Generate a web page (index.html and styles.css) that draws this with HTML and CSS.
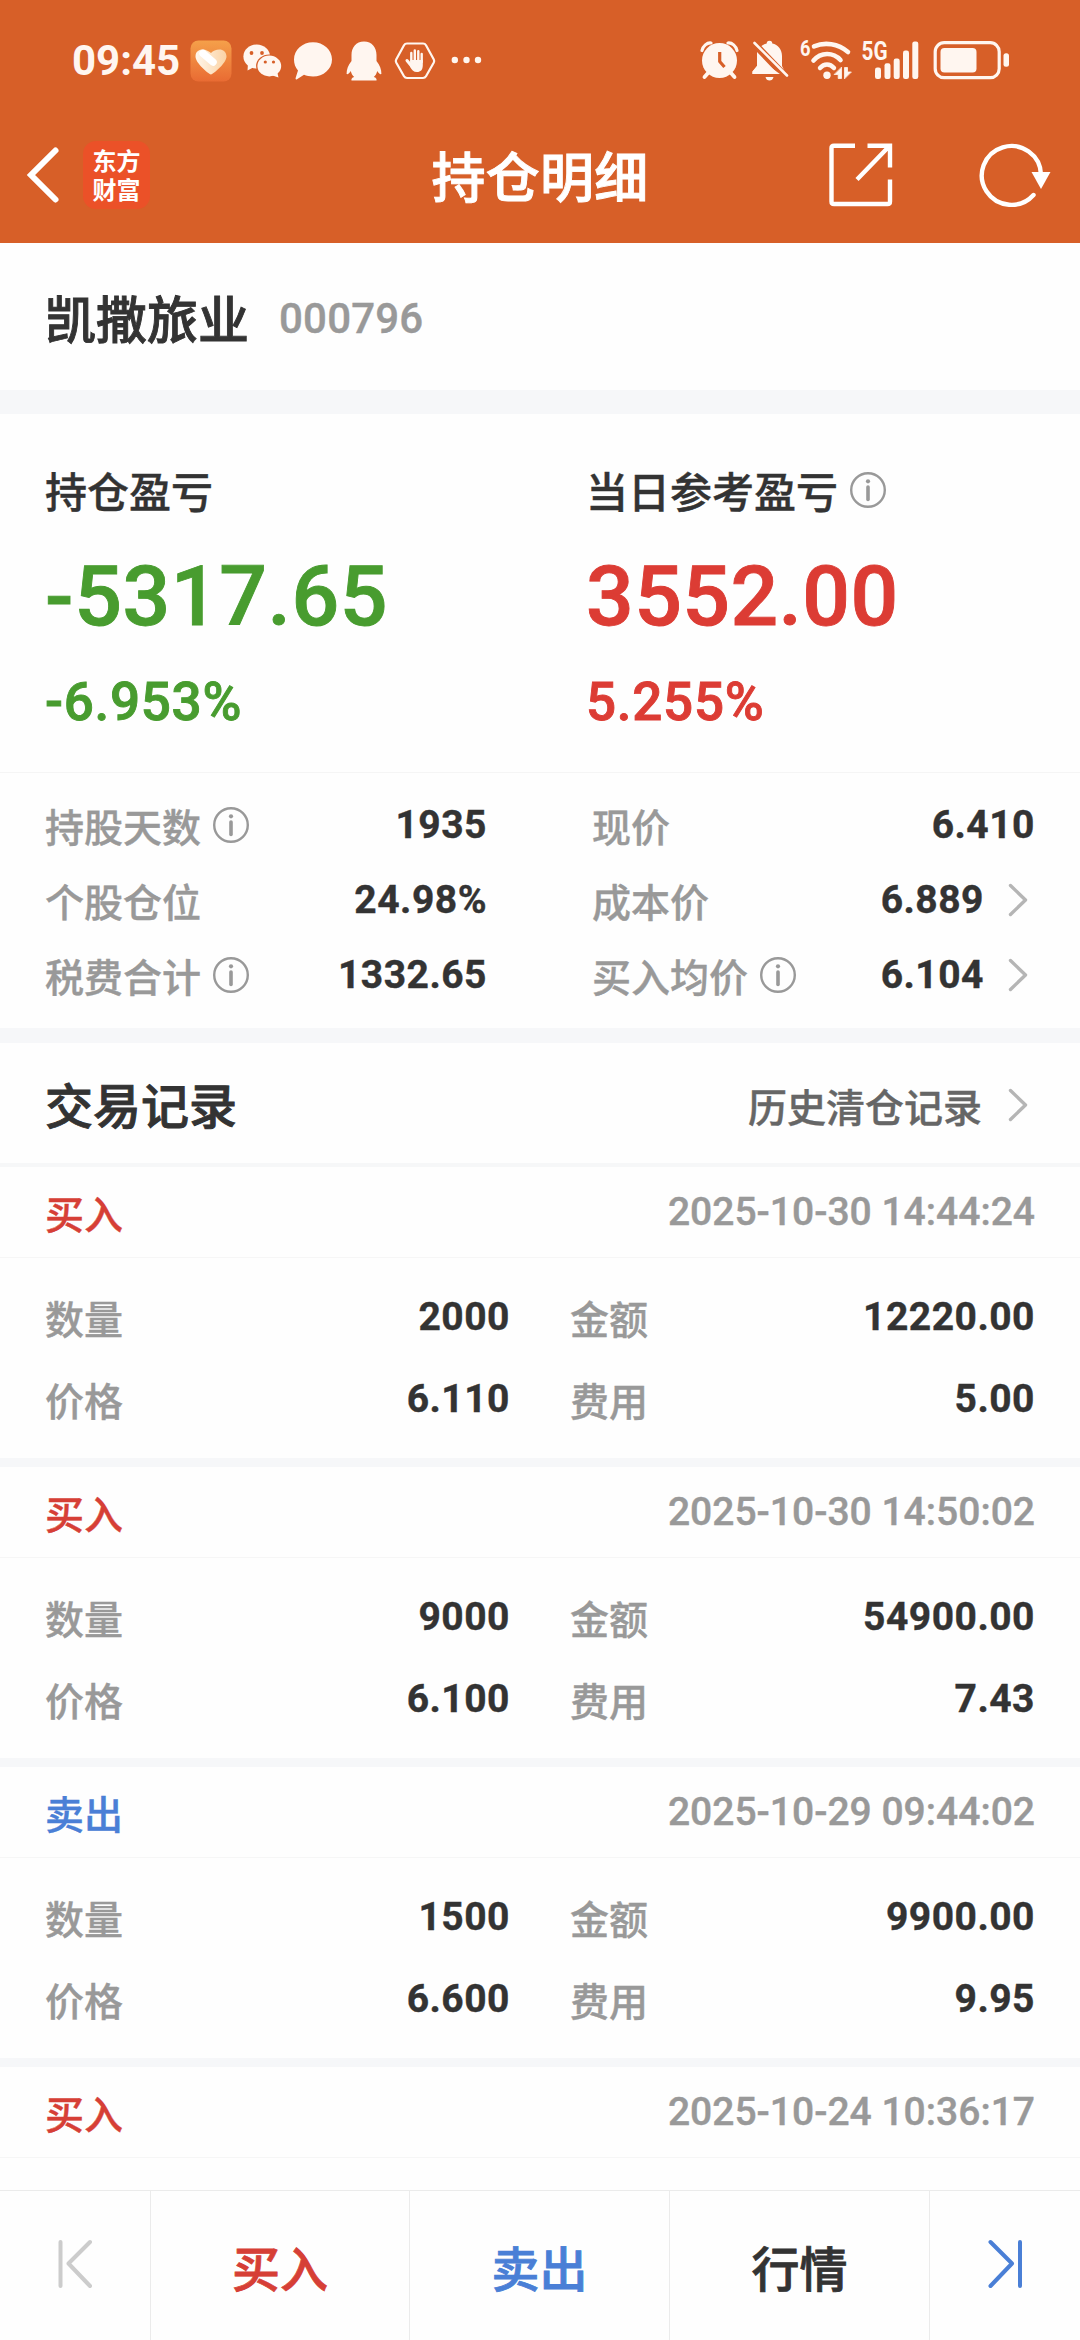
FILE: index.html
```
<!DOCTYPE html>
<html lang="zh-CN">
<head>
  <meta charset="UTF-8">
  <meta name="viewport" content="width=device-width, initial-scale=1.0">
  <title>持仓明细</title>
  <link rel="stylesheet" href="styles.css">
</head>

<body>

  <!-- shared icons -->
  <svg class="sprite" width="0" height="0">
    <symbol id="icon-info" viewBox="0 0 36 36">
      <circle cx="18" cy="18" r="16.8" fill="none" stroke="currentColor" stroke-width="2.4"/>
      <circle cx="18" cy="9.3" r="2.1" fill="currentColor"/>
      <path d="M18 15v12.5" stroke="currentColor" stroke-width="3.6" stroke-linecap="round"/>
    </symbol>
    <symbol id="icon-arrow" viewBox="0 0 20 34">
      <path d="M2.5 2.5L17.5 17L2.5 31.5" fill="none" stroke="currentColor" stroke-width="3.4" stroke-linecap="round" stroke-linejoin="round"/>
    </symbol>
  </svg>

  <div class="app">

    <header class="header">
      <div class="status-bar">
        <span class="time">09:45</span>
        <div class="status-left">
          <svg width="42" height="42" viewBox="0 0 42 42">
            <defs>
              <linearGradient id="tile" x1="0" y1="0" x2="0" y2="1">
                <stop offset="0" stop-color="#f5a04a"/>
                <stop offset="1" stop-color="#e96b33"/>
              </linearGradient>
              <linearGradient id="heart" x1="0" y1="0" x2="1" y2="0">
                <stop offset="0" stop-color="#fff6ea"/>
                <stop offset="1" stop-color="#fbd3a4"/>
              </linearGradient>
            </defs>
            <rect x="0.5" y="0.5" width="41" height="41" rx="8" fill="url(#tile)"/>
            <path d="M21 34.5C18 33.5 5.5 23 5.5 16.5C5.5 11.5 9 9.5 12.5 9.5C16 9.5 19 11.5 21 13C23 11 26 9.5 29.5 9.5C33 9.5 36.5 12 36.5 16.5C36.5 23 24 33.5 21 34.5Z" fill="url(#heart)"/>
            <path d="M13 13.5L23 22" stroke="#fff" stroke-width="7.5" stroke-linecap="round"/>
          </svg>
          <svg width="42" height="42" viewBox="0 0 42 42">
            <path d="M7 23L6.5 30.5L13 27Z" fill="#fff6f0"/>
            <ellipse cx="15.7" cy="16.5" rx="13.3" ry="12" fill="#fff6f0"/>
            <ellipse cx="28.3" cy="26" rx="13.2" ry="11.6" fill="#d75f28"/>
            <ellipse cx="28.3" cy="26" rx="11.9" ry="10.4" fill="#fff6f0"/>
            <path d="M30 35L37.5 37.5L36 31Z" fill="#fff6f0"/>
            <g fill="#d75f28">
              <circle cx="10.5" cy="13" r="1.9"/>
              <circle cx="21" cy="13" r="1.9"/>
              <circle cx="24.3" cy="22" r="1.6"/>
              <circle cx="32.5" cy="22" r="1.6"/>
            </g>
          </svg>
          <svg width="42" height="42" viewBox="0 0 42 42">
            <path d="M21 2.3C31.5 2.3 40 10 40 19.5C40 29 31.5 36.5 21 36.5C17.5 36.5 14.5 36 12 34.8L5 39.2C3.7 39.8 3.3 38.8 3.7 37.8L6 30.5C3.3 27.5 2 23.5 2 19.5C2 10 10.5 2.3 21 2.3Z" fill="#fff6f0"/>
          </svg>
          <svg width="42" height="42" viewBox="0 0 42 42">
            <path d="M21 1.5C13 1.5 8.5 7.5 8.5 15V21C5 25 3.5 30 3.6 34C4.8 34.6 6.5 33 7.8 31C8.3 33.5 9.5 35.5 11.2 37C9 37.6 8 39 8.5 40.5H33.5C34 39 33 37.6 30.8 37C32.5 35.5 33.7 33.5 34.2 31C35.5 33 37.2 34.6 38.4 34C38.5 30 37 25 33.5 21V15C33.5 7.5 29 1.5 21 1.5Z" fill="#fff6f0"/>
          </svg>
          <svg width="42" height="42" viewBox="0 0 42 42" fill="none" stroke="#fff6f0" stroke-linecap="round" stroke-linejoin="round">
            <path d="M13 3.5H29Q31 3.5 32 5.2L39.8 19.5Q40.6 21 39.8 22.5L32 36.3Q31 38 29 38H13Q11 38 10 36.3L2.2 22.5Q1.4 21 2.2 19.5L10 5.2Q11 3.5 13 3.5Z" stroke-width="2.2"/>
            <path d="M17.3 22V13M20.8 21V10.5M24.3 21V11.2M27.7 22V14" stroke-width="2.4"/>
            <path d="M13 20.5L17.5 26" stroke-width="3"/>
            <path d="M16.5 20H28.8V25C28.8 30 26.5 32 23 32C19.5 32 17.5 30 16 26.5Z" fill="#fff6f0" stroke="none"/>
          </svg>
          <svg width="42" height="42" viewBox="0 0 42 42" fill="#fff6f0">
            <circle cx="9.8" cy="20" r="3.2"/>
            <circle cx="21.5" cy="20" r="3.2"/>
            <circle cx="33" cy="20" r="3.2"/>
          </svg>
        </div>

        <div class="status-right">
          <svg width="42" height="42" viewBox="0 0 42 42">
            <circle cx="20.5" cy="20.5" r="17.5" fill="#fff6f0"/>
            <path d="M3 10.5C4 6 8 2.5 12 3M38 10.5C37 6 33 2.5 29 3" fill="none" stroke="#fff6f0" stroke-width="3.2" stroke-linecap="round"/>
            <path d="M9 33L5.5 37M32 33L35.5 37" stroke="#fff6f0" stroke-width="3.8" stroke-linecap="round"/>
            <path d="M20.7 12V21.5L25.5 27" fill="none" stroke="#d75f28" stroke-width="3.2" stroke-linejoin="round"/>
          </svg>
          <svg class="bell" width="42" height="42" viewBox="0 0 42 42">
            <path d="M19.5 0.8C21.5 0.8 22.3 2 22.3 3.6C28 4.8 32 9.5 32 16V26L36 34H2.5V31.5L7 26V16C7 9.5 11 4.8 16.7 3.6C16.7 2 17.5 0.8 19.5 0.8Z" fill="#fff6f0"/>
            <path d="M15.5 37H23.5C23 39.5 21.5 40.5 19.5 40.5C17.5 40.5 16 39.5 15.5 37Z" fill="#fff6f0"/>
            <path d="M0 0L6 0.5L40 36L34 37L2.5 14Z" fill="#d75f28"/>
            <path d="M7 12L7 26L2.5 31.5V34H28Z" fill="#fff6f0"/>
            <path d="M4.5 3L37 35.5" stroke="#fff6f0" stroke-width="2.6" stroke-linecap="round"/>
          </svg>
          <svg class="wifi" width="52" height="42" viewBox="0 0 52 42" fill="none" stroke="#fff6f0" stroke-linecap="round">
            <text class="net-text" x="0" y="16" font-size="22" textLength="10.5" lengthAdjust="spacingAndGlyphs">6</text>
            <path d="M14 6.3C25 1.8 38 3.5 48 12" stroke-width="4.6"/>
            <path d="M13.5 20.5C21 12 33 12 40.5 20" stroke-width="4.6"/>
            <path d="M20 28C24 23.3 30 23.3 34 28" stroke-width="4.4"/>
            <circle cx="27" cy="35.2" r="3.7" fill="#fff6f0" stroke="none"/>
            <path d="M41.5 27.5V38.5H38.2V34.5H34.5ZM44.5 38.5V27.5H47.5V32H51Z" fill="#fff6f0" stroke="#fff6f0" stroke-width="0.8" stroke-linejoin="round"/>
          </svg>
          <svg class="signal" width="59" height="42" viewBox="0 0 59 42" fill="#fff6f0">
            <text class="net-text" x="0.5" y="20" font-size="26" textLength="26" lengthAdjust="spacingAndGlyphs">5G</text>
            <rect x="14" y="27.5" width="6" height="11.5" rx="2.2"/>
            <rect x="23.5" y="23.2" width="6" height="15.8" rx="2.2"/>
            <rect x="32.7" y="18.5" width="6" height="20.5" rx="2.2"/>
            <rect x="42" y="10.5" width="6" height="28.5" rx="2.2"/>
            <rect x="51.3" y="1.5" width="6" height="37.5" rx="2.2"/>
          </svg>
          <svg class="battery" width="77" height="42" viewBox="0 0 77 42">
            <rect x="2.2" y="2.7" width="64" height="35" rx="9" fill="none" stroke="#fff6f0" stroke-width="3.2"/>
            <rect x="7.5" y="8" width="36" height="24.5" rx="4" fill="#fff6f0"/>
            <rect x="70.5" y="13.3" width="5.5" height="13.5" rx="2.5" fill="#fff6f0"/>
          </svg>
        </div>
      </div>

      <nav class="nav-bar">
        <div class="nav-left">
          <svg width="32" height="56" viewBox="0 0 32 56">
            <path d="M27.5 3.5L3 28L27.5 52.5" fill="none" stroke="#fff" stroke-width="6" stroke-linecap="round"/>
          </svg>
          <div class="logo">东方<br>财富</div>
        </div>
        <h1>持仓明细</h1>
        <div class="nav-right">
          <svg width="64" height="64" viewBox="0 0 64 64" fill="none" stroke="#fff" stroke-width="4.4">
            <path d="M26 2.7H5Q2.5 2.7 2.5 5V58.5Q2.5 61 5 61H58.5Q61 61 61 58.500V36.5"/>
            <path d="M38.5 2.7H61V24.5M59.5 4L28 36.5"/>
          </svg>
          <svg width="72" height="64" viewBox="0 0 72 64">
            <path d="M53.5 52A29.6 29.4 0 1 1 61 31.7" fill="none" stroke="#fff" stroke-width="4.4" stroke-linecap="round"/>
            <path d="M51.5 29H70.5L61 46Z" fill="#fff"/>
          </svg>
        </div>
      </nav>
    </header>

    <main class="content">

      <section class="stock">
        <h2>凯撒旅业</h2>
        <span class="code">000796</span>
      </section>

      <section class="profit">
        <div class="profit-item green">
          <div class="profit-label">持仓盈亏</div>
          <div class="profit-value">-5317.65</div>
          <div class="profit-rate">-6.953%</div>
        </div>
        <div class="profit-item red">
          <div class="profit-label">当日参考盈亏<svg class="info"><use href="#icon-info"/></svg></div>
          <div class="profit-value">3552.00</div>
          <div class="profit-rate">5.255%</div>
        </div>
      </section>

      <section class="detail">
        <div class="cell"><span class="label">持股天数</span><svg class="info"><use href="#icon-info"/></svg><span class="value">1935</span></div>
        <div class="cell"><span class="label">现价</span><span class="value">6.410</span></div>
        <div class="cell"><span class="label">个股仓位</span><span class="value">24.98%</span></div>
        <div class="cell"><span class="label">成本价</span><span class="value">6.889</span><svg class="arrow"><use href="#icon-arrow"/></svg></div>
        <div class="cell"><span class="label">税费合计</span><svg class="info"><use href="#icon-info"/></svg><span class="value">1332.65</span></div>
        <div class="cell"><span class="label">买入均价</span><svg class="info"><use href="#icon-info"/></svg><span class="value">6.104</span><svg class="arrow"><use href="#icon-arrow"/></svg></div>
      </section>

      <section class="records">
        <div class="records-title">
          <h2>交易记录</h2>
          <a class="history">历史清仓记录<svg class="arrow"><use href="#icon-arrow"/></svg></a>
        </div>

        <div class="record">
          <div class="record-head"><span class="buy">买入</span><span class="date">2025-10-30 14:44:24</span></div>
          <div class="record-body">
            <div class="cell"><span class="label">数量</span><span class="value">2000</span></div>
            <div class="cell"><span class="label">金额</span><span class="value">12220.00</span></div>
            <div class="cell"><span class="label">价格</span><span class="value">6.110</span></div>
            <div class="cell"><span class="label">费用</span><span class="value">5.00</span></div>
          </div>
        </div>

        <div class="record">
          <div class="record-head"><span class="buy">买入</span><span class="date">2025-10-30 14:50:02</span></div>
          <div class="record-body">
            <div class="cell"><span class="label">数量</span><span class="value">9000</span></div>
            <div class="cell"><span class="label">金额</span><span class="value">54900.00</span></div>
            <div class="cell"><span class="label">价格</span><span class="value">6.100</span></div>
            <div class="cell"><span class="label">费用</span><span class="value">7.43</span></div>
          </div>
        </div>

        <div class="record">
          <div class="record-head"><span class="sell">卖出</span><span class="date">2025-10-29 09:44:02</span></div>
          <div class="record-body">
            <div class="cell"><span class="label">数量</span><span class="value">1500</span></div>
            <div class="cell"><span class="label">金额</span><span class="value">9900.00</span></div>
            <div class="cell"><span class="label">价格</span><span class="value">6.600</span></div>
            <div class="cell"><span class="label">费用</span><span class="value">9.95</span></div>
          </div>
        </div>

        <div class="record">
          <div class="record-head"><span class="buy">买入</span><span class="date">2025-10-24 10:36:17</span></div>
        </div>
      </section>

    </main>

    <footer class="tab-bar">
      <div class="tab prev">
        <svg width="34" height="48" viewBox="0 0 34 48" fill="none" stroke="currentColor" stroke-width="4" stroke-linecap="round" stroke-linejoin="round">
          <path d="M2.5 2V46M32 2L10.5 23.5L32 46"/>
        </svg>
      </div>
      <div class="tab buy">买入</div>
      <div class="tab sell">卖出</div>
      <div class="tab">行情</div>
      <div class="tab next">
        <svg width="34" height="48" viewBox="0 0 34 48" fill="none" stroke="currentColor" stroke-width="4" stroke-linecap="round" stroke-linejoin="round">
          <path d="M32 2V46M2.5 2L24 23.5L2.5 46"/>
        </svg>
      </div>
    </footer>

  </div>

</body>
</html>
```
FILE: styles.css
```
* {
  box-sizing: border-box;
}

body {
  margin: 0;
  background: #fefefe;
  color: #333;
  font-family: "Noto Sans CJK SC", sans-serif;
  font-weight: 500;
  -webkit-text-stroke: 0.4px currentColor;
}

h1, h2 {
  margin: 0;
  font-weight: 500;
  -webkit-text-stroke-width: 0.9px;
}

svg {
  display: block;
  flex-shrink: 0;
  overflow: visible;
}

.sprite {
  position: absolute;
}

.app {
  display: flex;
  flex-direction: column;
  width: 1080px;
  height: 2340px;
  overflow: hidden;
}

/* header */
.header {
  flex-shrink: 0;
  height: 243px;
  background: #d75f28;
  color: #fff;
}

.status-bar {
  display: flex;
  align-items: center;
  height: 121px;
  padding: 0 70px 0 72px;
}

.time {
  width: 118px;
  font-family: Roboto, sans-serif;
  font-size: 42px;
  font-weight: 700;
  color: #fff6f0;
  -webkit-text-stroke-width: 0;
}

.status-left {
  display: flex;
  gap: 9px;
}

.status-right {
  display: flex;
  margin-left: auto;
}

.bell {
  margin-left: 9px;
}

.wifi {
  margin-left: 8px;
}

.signal {
  margin-left: 9px;
}

.battery {
  margin-left: 13px;
}

.net-text {
  font-family: Roboto, sans-serif;
  font-weight: 700;
  fill: #fff6f0;
  stroke: none;
  -webkit-text-stroke-width: 0;
}

.nav-bar {
  display: grid;
  grid-template-columns: 1fr auto 1fr;
  align-items: center;
  height: 108px;
  padding: 0 28px;
}

.nav-bar h1 {
  font-size: 54px;
  line-height: 80px;
  letter-spacing: 0.3px;
}

.nav-left {
  display: flex;
  align-items: center;
  gap: 23px;
}

.logo {
  width: 67px;
  height: 68px;
  padding-top: 4px;
  border-radius: 13px;
  background: #eb5128;
  font-size: 24px;
  font-weight: 700;
  line-height: 29px;
  text-align: center;
  -webkit-text-stroke-width: 0;
}

.nav-right {
  display: flex;
  align-items: center;
  justify-content: flex-end;
  gap: 87px;
}

/* stock name */
.stock {
  display: flex;
  align-items: center;
  height: 147px;
  padding: 0 45px;
}

.stock h2 {
  font-size: 51px;
  line-height: 76px;
}

.code {
  margin-left: 30px;
  padding-top: 3px;
  font-family: Roboto, sans-serif;
  font-size: 42px;
  letter-spacing: 0.2px;
  color: #999;
}

/* profit and loss */
.profit {
  display: grid;
  grid-template-columns: 541px 1fr;
  height: 383px;
  padding: 46px 45px 0;
  border-top: 24px solid #f6f7f9;
  border-bottom: 1px solid #f5f5f5;
}

.profit-label {
  display: flex;
  align-items: center;
  height: 60px;
  padding-bottom: 1px;
  font-size: 42px;
}

.profit-value {
  margin-top: 27px;
  font-family: Roboto, sans-serif;
  font-size: 84px;
  line-height: 100px;
  letter-spacing: 0.4px;
  -webkit-text-stroke-width: 0.9px;
}

.profit-rate {
  margin-top: 25px;
  font-family: Roboto, sans-serif;
  font-size: 53px;
  line-height: 60px;
  letter-spacing: 0.7px;
  -webkit-text-stroke-width: 0.9px;
}

.green .profit-value,
.green .profit-rate {
  color: #489c2f;
}

.green .profit-value {
  letter-spacing: 0.6px;
}

.red .profit-value,
.red .profit-rate {
  color: #dc3c34;
}

.info {
  width: 36px;
  height: 36px;
  margin-left: 12px;
  color: #999;
}

.arrow {
  width: 20px;
  height: 34px;
  margin-left: 26px;
  margin-right: 7px;
  color: #b5b5b5;
}

/* label + value cells */
.cell {
  display: flex;
  align-items: center;
  font-size: 39px;
}

.label {
  color: #999;
}

.value {
  margin-left: auto;
  font-family: Roboto, sans-serif;
  font-weight: 700;
  letter-spacing: 0.5px;
}

.value + .arrow {
  margin-left: 24px;
}

.detail {
  display: grid;
  grid-template-columns: 442px 443px;
  column-gap: 105px;
  grid-auto-rows: 75px;
  height: 255px;
  padding: 14px 45px 0;
}

/* trade records */
.records {
  border-top: 15px solid #f6f7f9;
}

.records-title {
  display: flex;
  align-items: center;
  justify-content: space-between;
  height: 124px;
  padding: 0 45px;
  border-bottom: 4px solid #f6f7f8;
}

.records-title h2 {
  font-size: 48px;
}

.history {
  display: flex;
  align-items: center;
  padding-top: 3px;
  font-size: 39px;
  color: #666;
}

.record {
  border-bottom: 9px solid #f6f7f9;
}

.record:last-child {
  border-bottom: none;
}

.record-head {
  display: flex;
  align-items: center;
  justify-content: space-between;
  height: 91px;
  padding: 0 45px;
  border-bottom: 1px solid #f6f6f6;
  font-size: 39px;
}

.date {
  font-family: Roboto, sans-serif;
  color: #999;
}

.record-body {
  display: grid;
  grid-template-columns: 465px 465px;
  column-gap: 60px;
  grid-auto-rows: 82px;
  height: 200px;
  padding: 18px 45px;
}

.buy {
  color: #d63f36;
}

.sell {
  color: #4a7fd6;
}

.content {
  flex: 1;
  min-height: 0;
  overflow: hidden;
}

/* bottom bar */
.tab-bar {
  display: grid;
  grid-template-columns: 150px 259px 260px 260px 151px;
  flex-shrink: 0;
  height: 150px;
  border-top: 1px solid #ebebeb;
}

.tab {
  display: flex;
  align-items: center;
  justify-content: center;
  border-left: 1px solid #ebebeb;
  font-size: 48px;
  -webkit-text-stroke-width: 0.8px;
}

.prev {
  border-left: none;
  padding-bottom: 3px;
  color: #ccc;
}

.next {
  padding-bottom: 3px;
  color: #4a7fd6;
}
```
